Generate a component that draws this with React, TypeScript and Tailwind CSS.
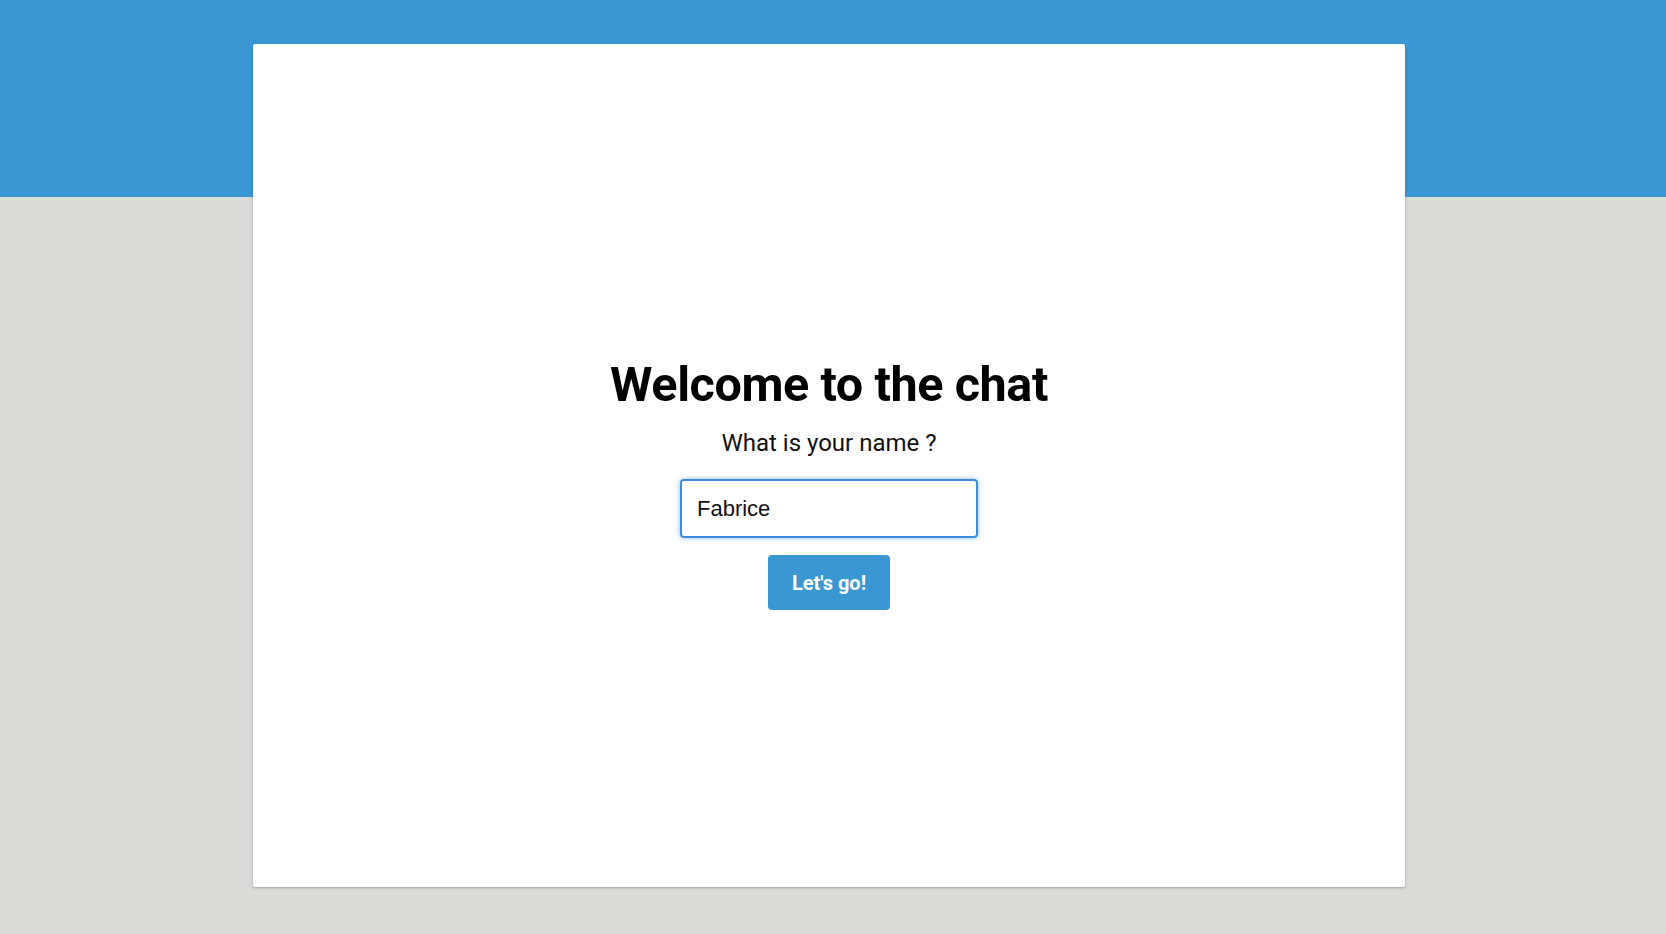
import { useState } from "react";

const App = () => {
  const [name, setName] = useState("Fabrice");

  return (
    <div className="min-h-[934px] bg-[#d9dbd7] font-['Roboto',sans-serif]">
      <div className="h-[197px] bg-[#3998d4]" />
      <div className="ml-[253px] -mt-[153px] w-[1152px] h-[843px] bg-white rounded-[2px] shadow-[0_1px_3px_rgba(0,0,0,0.25)] flex flex-col items-center pt-[310px]">
        <h1 className="text-[48.5px] leading-[62px] font-bold text-black tracking-[-0.4px]">Welcome to the chat</h1>
        <p className="mt-[12px] text-[24px] leading-[30px] text-[#111]">What is your name ?</p>
        <input
          autoFocus
          value={name}
          onChange={(e) => setName(e.target.value)}
          className="mt-[21px] w-[298px] h-[59px] px-[15px] border-2 border-[#3b8edb] rounded-[4px] shadow-[0_0_5px_rgba(59,142,219,0.6)] outline-none text-[22px] text-[#111] font-['Liberation_Sans',Arial,sans-serif]"
        />
        <button className="mt-[17px] w-[122px] h-[55px] bg-[#3998d4] rounded-[4px] text-white text-[20px] font-bold">
          Let's go!
        </button>
      </div>
    </div>
  );
};

export default App;
